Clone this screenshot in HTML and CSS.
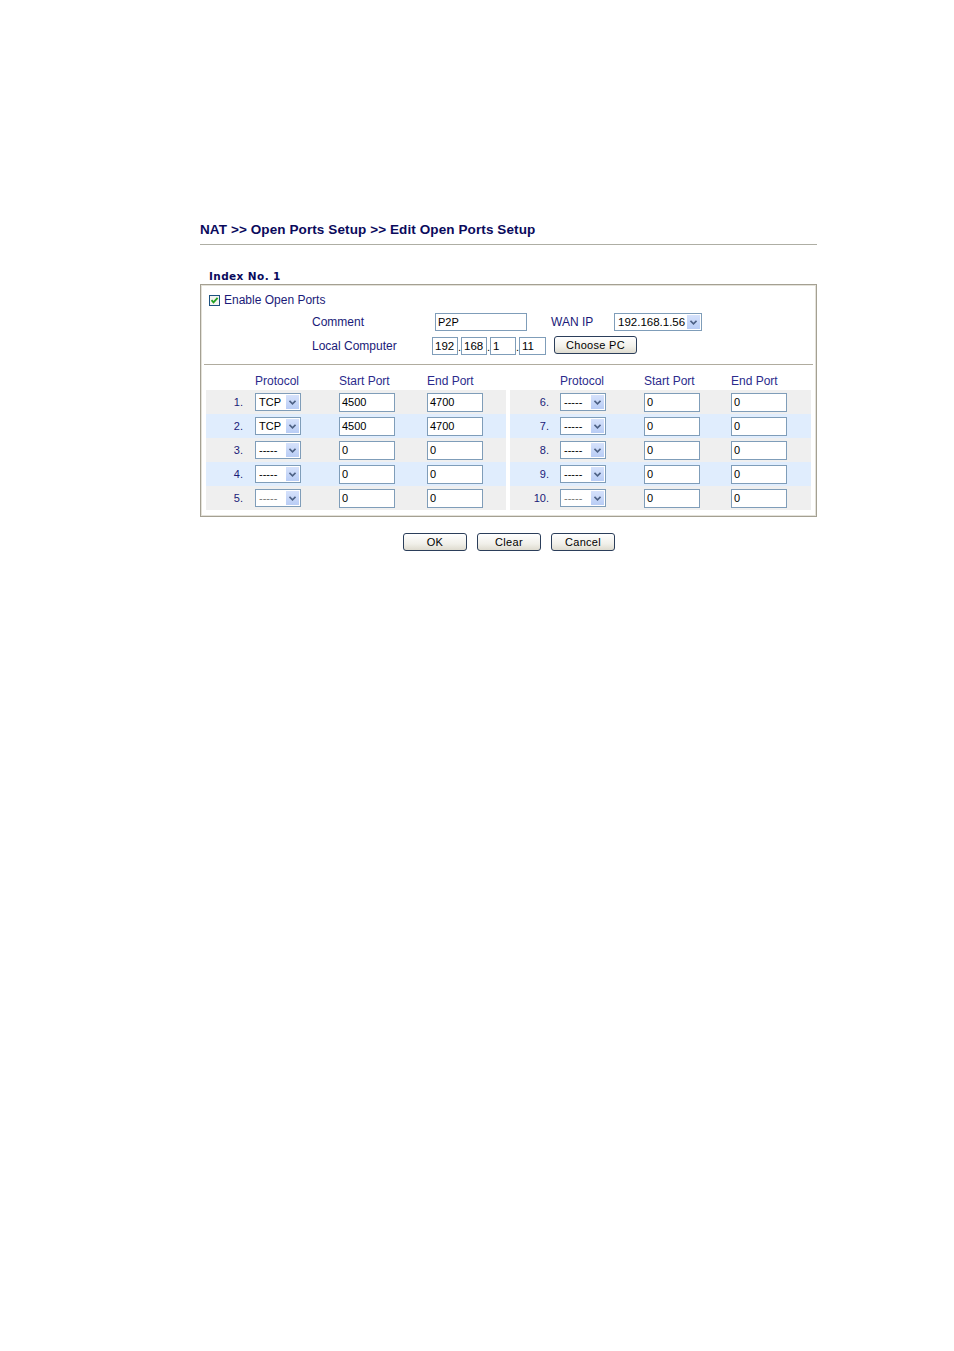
FILE: index.html
```html
<!DOCTYPE html>
<html>
<head>
<meta charset="utf-8">
<link rel="stylesheet" href="styles.css">
</head>
<body>
<div class="page">
  <div class="title">NAT &gt;&gt; Open Ports Setup &gt;&gt; Edit Open Ports Setup</div>
  <div class="index">Index No. 1</div>
  <div class="box">
    <div class="enable">
      <span class="check"><svg width="9" height="9" viewBox="0 0 9 9"><path d="M1.5 4.2 L3.5 6.4 L7.6 1.8" fill="none" stroke="#21a121" stroke-width="1.8"/></svg></span>
      <span class="label">Enable Open Ports</span>
    </div>
    <div class="frow r1">
      <span class="label lab-comment">Comment</span>
      <span class="input in-comment">P2P</span>
      <span class="label lab-wan">WAN IP</span>
      <span class="select sel-wan"><span class="sv">192.168.1.56</span><span class="arr"><svg width="7" height="5" viewBox="0 0 7 5"><path d="M0.5 0.8 L3.5 3.8 L6.5 0.8" fill="none" stroke="#4d6185" stroke-width="1.6"/></svg></span></span>
    </div>
    <div class="frow r2">
      <span class="label lab-local">Local Computer</span>
      <span class="input ip">192</span><span class="dot">.</span><span class="input ip">168</span><span class="dot">.</span><span class="input ip">1</span><span class="dot">.</span><span class="input ip ip4">11</span>
      <span class="btn btn-choose">Choose PC</span>
    </div>
    <div class="sep"></div>
    <div class="tables">
      <div class="tbl left">
        <div class="hd"></div><div class="hd">Protocol</div><div class="hd">Start Port</div><div class="hd">End Port</div>
        <div class="num odd">1.</div><div class="c odd"><span class="select ps"><span class="sv">TCP</span><span class="arr"><svg width="7" height="5" viewBox="0 0 7 5"><path d="M0.5 0.8 L3.5 3.8 L6.5 0.8" fill="none" stroke="#4d6185" stroke-width="1.6"/></svg></span></span></div><div class="c odd"><span class="input port">4500</span></div><div class="c odd"><span class="input port">4700</span></div>
        <div class="num even">2.</div><div class="c even"><span class="select ps"><span class="sv">TCP</span><span class="arr"><svg width="7" height="5" viewBox="0 0 7 5"><path d="M0.5 0.8 L3.5 3.8 L6.5 0.8" fill="none" stroke="#4d6185" stroke-width="1.6"/></svg></span></span></div><div class="c even"><span class="input port">4500</span></div><div class="c even"><span class="input port">4700</span></div>
        <div class="num odd">3.</div><div class="c odd"><span class="select ps"><span class="sv">-----</span><span class="arr"><svg width="7" height="5" viewBox="0 0 7 5"><path d="M0.5 0.8 L3.5 3.8 L6.5 0.8" fill="none" stroke="#4d6185" stroke-width="1.6"/></svg></span></span></div><div class="c odd"><span class="input port">0</span></div><div class="c odd"><span class="input port">0</span></div>
        <div class="num even">4.</div><div class="c even"><span class="select ps"><span class="sv">-----</span><span class="arr"><svg width="7" height="5" viewBox="0 0 7 5"><path d="M0.5 0.8 L3.5 3.8 L6.5 0.8" fill="none" stroke="#4d6185" stroke-width="1.6"/></svg></span></span></div><div class="c even"><span class="input port">0</span></div><div class="c even"><span class="input port">0</span></div>
        <div class="num odd">5.</div><div class="c odd"><span class="select ps dim"><span class="sv">-----</span><span class="arr"><svg width="7" height="5" viewBox="0 0 7 5"><path d="M0.5 0.8 L3.5 3.8 L6.5 0.8" fill="none" stroke="#4d6185" stroke-width="1.6"/></svg></span></span></div><div class="c odd"><span class="input port">0</span></div><div class="c odd"><span class="input port">0</span></div>
      </div>
      <div class="tbl right">
        <div class="hd"></div><div class="hd">Protocol</div><div class="hd">Start Port</div><div class="hd">End Port</div>
        <div class="num odd">6.</div><div class="c odd"><span class="select ps"><span class="sv">-----</span><span class="arr"><svg width="7" height="5" viewBox="0 0 7 5"><path d="M0.5 0.8 L3.5 3.8 L6.5 0.8" fill="none" stroke="#4d6185" stroke-width="1.6"/></svg></span></span></div><div class="c odd"><span class="input port">0</span></div><div class="c odd"><span class="input port">0</span></div>
        <div class="num even">7.</div><div class="c even"><span class="select ps"><span class="sv">-----</span><span class="arr"><svg width="7" height="5" viewBox="0 0 7 5"><path d="M0.5 0.8 L3.5 3.8 L6.5 0.8" fill="none" stroke="#4d6185" stroke-width="1.6"/></svg></span></span></div><div class="c even"><span class="input port">0</span></div><div class="c even"><span class="input port">0</span></div>
        <div class="num odd">8.</div><div class="c odd"><span class="select ps"><span class="sv">-----</span><span class="arr"><svg width="7" height="5" viewBox="0 0 7 5"><path d="M0.5 0.8 L3.5 3.8 L6.5 0.8" fill="none" stroke="#4d6185" stroke-width="1.6"/></svg></span></span></div><div class="c odd"><span class="input port">0</span></div><div class="c odd"><span class="input port">0</span></div>
        <div class="num even">9.</div><div class="c even"><span class="select ps"><span class="sv">-----</span><span class="arr"><svg width="7" height="5" viewBox="0 0 7 5"><path d="M0.5 0.8 L3.5 3.8 L6.5 0.8" fill="none" stroke="#4d6185" stroke-width="1.6"/></svg></span></span></div><div class="c even"><span class="input port">0</span></div><div class="c even"><span class="input port">0</span></div>
        <div class="num odd">10.</div><div class="c odd"><span class="select ps dim"><span class="sv">-----</span><span class="arr"><svg width="7" height="5" viewBox="0 0 7 5"><path d="M0.5 0.8 L3.5 3.8 L6.5 0.8" fill="none" stroke="#4d6185" stroke-width="1.6"/></svg></span></span></div><div class="c odd"><span class="input port">0</span></div><div class="c odd"><span class="input port">0</span></div>
      </div>
    </div>
  </div>
  <div class="buttons">
    <span class="btn">OK</span>
    <span class="btn">Clear</span>
    <span class="btn">Cancel</span>
  </div>
</div>
</body>
</html>
```

FILE: styles.css
```css
html, body {
  margin: 0;
  padding: 0;
  background: #ffffff;
}
body {
  width: 954px;
  height: 1351px;
  font-family: "Liberation Sans", Arial, sans-serif;
}
.page {
  width: 617px;
  margin-left: 200px;
  padding-top: 222px;
}
.title {
  font-weight: bold;
  font-size: 13.5px;
  line-height: 16px;
  color: #0a0a5c;
  padding-bottom: 6px;
  border-bottom: 1px solid #aeaea4;
  letter-spacing: 0.1px;
}
.index {
  margin-top: 24px;
  padding-left: 9px;
  font-family: "DejaVu Sans", Verdana, sans-serif;
  font-weight: bold;
  font-size: 10.5px;
  line-height: 14px;
  color: #0a0a5c;
  letter-spacing: 0.4px;
}
.box {
  margin-top: 1px;
  border: 1px solid #a4a092;
  box-shadow: inset 1px 1px 0 #e4e2da, inset -1px -1px 0 #e4e2da;
  padding: 4px 1px 6px 1px;
}
.label {
  font-size: 12px;
  color: #1a1a78;
}
.enable {
  display: flex;
  align-items: center;
  height: 22px;
  padding-left: 7px;
}
.check {
  width: 9px;
  height: 9px;
  border: 1px solid #1c5180;
  background: #f4f4f0;
  display: flex;
  align-items: center;
  justify-content: center;
  margin-right: 4px;
}
.check svg { display: block; }
.frow {
  display: flex;
  align-items: center;
  padding-left: 110px;
}
.r1 { height: 22px; }
.r2 { height: 22px; margin-top: 2px; }
.lab-comment { width: 123px; }
.lab-local { width: 120px; }
.lab-wan { width: 63px; margin-left: 24px; }
.input {
  display: inline-block;
  box-sizing: border-box;
  height: 18px;
  border: 1px solid #7f9db9;
  background: #fff;
  font-size: 11px;
  line-height: 16px;
  padding-left: 2px;
  color: #000;
}
.in-comment { width: 92px; }
.ip { width: 26px; font-size: 11.5px; }
.ip4 { width: 27px; }
.dot {
  width: 3px;
  font-size: 11px;
  align-self: flex-end;
  line-height: 14px;
  padding-bottom: 3px;
  color: #000;
}
.select {
  display: inline-flex;
  box-sizing: border-box;
  height: 18px;
  border: 1px solid #7f9db9;
  background: #fff;
  align-items: center;
  justify-content: space-between;
  padding: 0 1px 0 3px;
  font-size: 11px;
  color: #000;
}
.sel-wan { width: 88px; font-size: 11.5px; }
.arr {
  width: 13px;
  height: 14px;
  background: linear-gradient(#d6e2fb, #b9cdf5);
  display: flex;
  align-items: center;
  justify-content: center;
}
.arr svg { display: block; }
.btn {
  display: inline-flex;
  align-items: center;
  justify-content: center;
  box-sizing: border-box;
  width: 64px;
  height: 18px;
  border: 1px solid #2b3e5a;
  border-radius: 3px;
  background: linear-gradient(#ffffff, #f1f0ea 60%, #dedbcf);
  font-size: 11px;
  color: #000;
  letter-spacing: 0.3px;
}
.btn-choose {
  width: 83px;
  margin-left: 8px;
  margin-top: -2px;
}
.sep {
  height: 1px;
  background: #b0ac9f;
  margin: 7px 2px 0 2px;
}
.tables {
  display: flex;
  gap: 4px;
  margin: 0 4px;
}
.tbl {
  display: grid;
  grid-template-rows: 25px repeat(5, 24px);
}
.left { width: 300px; grid-template-columns: 49px 84px 88px 79px; }
.right { width: 301px; grid-template-columns: 50px 84px 87px 80px; }
.hd {
  font-size: 12px;
  color: #2b2b8c;
  display: flex;
  align-items: flex-end;
  padding-bottom: 2px;
  background: #fff;
}
.odd { background: #efefef; }
.even { background: #e0edfd; }
.num {
  font-size: 11px;
  color: #1a1a78;
  display: flex;
  align-items: center;
  justify-content: flex-end;
  padding-right: 12px;
}
.right .num { padding-right: 11px; }
.c {
  display: flex;
  align-items: center;
}
.ps { width: 46px; }
.port { width: 56px; height: 19px; }
.dim .sv { color: #777; }
.buttons {
  display: flex;
  justify-content: center;
  gap: 10px;
  margin-top: 16px;
  padding-left: 1px;
}
```
